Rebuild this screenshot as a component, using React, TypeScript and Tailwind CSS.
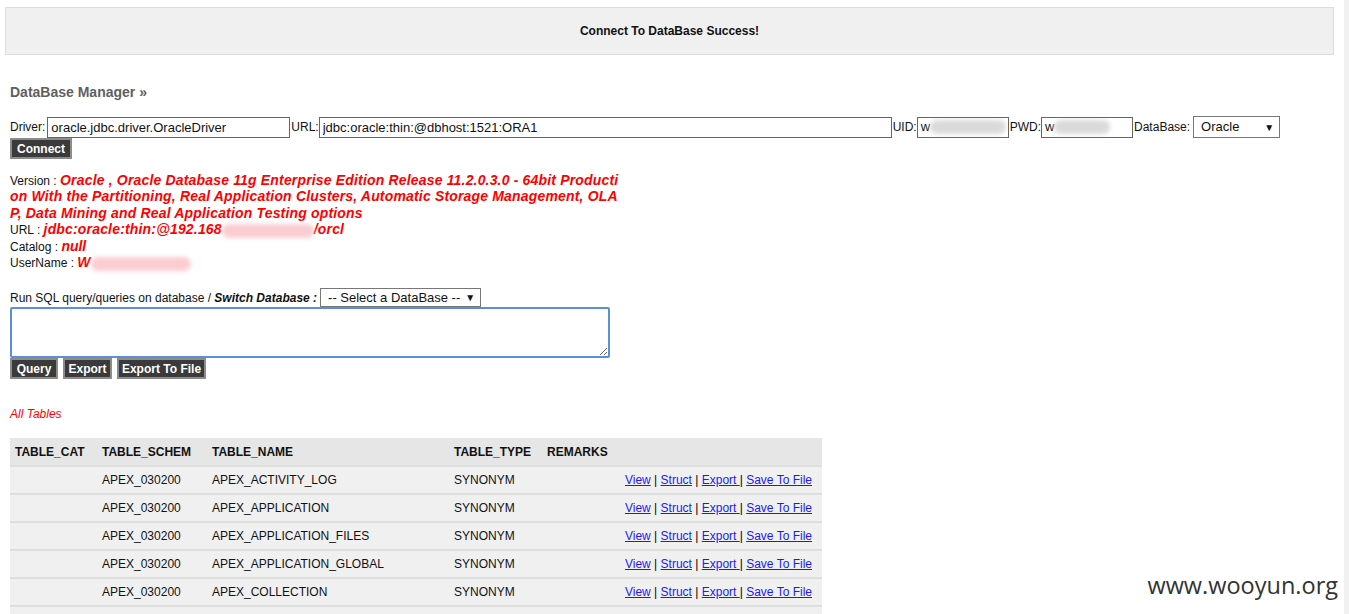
import React from "react";

const ROWS = [
  "APEX_ACTIVITY_LOG",
  "APEX_APPLICATION",
  "APEX_APPLICATION_FILES",
  "APEX_APPLICATION_GLOBAL",
  "APEX_COLLECTION",
  "APEX_COLLECTION_MEMBERS",
];

function DarkButton({ label, w }: { label: string; w: string }) {
  return (
    <button
      className={`${w} h-[21px] bg-[#3a3a3a] border-2 border-[#8c8c8c] text-white font-bold text-[12px] leading-none flex items-center justify-center`}
    >
      {label}
    </button>
  );
}

function FakeSelect({ label, w, h }: { label: string; w: string; h: string }) {
  return (
    <div
      className={`${w} ${h} border border-[#777] bg-white flex items-center justify-between pl-[7px] pr-[5px] text-[13px] text-[#111]`}
    >
      <span>{label}</span>
      <span className="text-[10px]">▼</span>
    </div>
  );
}

function Blur({ w, color }: { w: string; color: string }) {
  return <span className={`inline-block ${w} h-[14px] ${color} rounded-full blur-[2px] align-middle`} />;
}

function Links() {
  return (
    <span className="text-[#1a1aff]">
      <a className="underline">View</a> <span className="text-black">|</span> <a className="underline">Struct</a>{" "}
      <span className="text-black">|</span> <a className="underline">Export </a>
      <span className="text-black">|</span> <a className="underline">Save To File</a>
    </span>
  );
}

export default function App() {
  return (
    <div className="min-h-screen flex bg-white text-[12px] text-[#111]" style={{ fontFamily: '"Liberation Sans", Arial, sans-serif' }}>
      <div className="flex-1 relative">
        {/* status banner */}
        <div className="mt-[7px] ml-[5px] mr-[10px] h-[48px] bg-[#f0f0f0] border border-[#dcdcdc] flex items-center justify-center font-bold text-[12px] text-[#111]">
          Connect To DataBase Success!
        </div>

        <div className="px-[10px]">
          <h2 className="mt-[29px] text-[14px] font-bold text-[#5f5f5f] leading-[16px]">DataBase Manager »</h2>

          {/* connection form */}
          <div className="mt-[16px] flex items-center h-[22px]">
            <span>Driver:</span>
            <input
              defaultValue="oracle.jdbc.driver.OracleDriver"
              className="ml-[2px] w-[243px] h-[21px] border border-[#666] px-[3px] text-[13px] outline-none"
            />
            <span className="ml-[1px]">URL:</span>
            <input
              defaultValue="jdbc:oracle:thin:@dbhost:1521:ORA1"
              className="w-[573px] h-[21px] border border-[#666] px-[3px] text-[13px] outline-none"
            />
            <span className="ml-[1px]">UID:</span>
            <div className="w-[92px] h-[21px] border border-[#666] flex items-center pl-[3px] text-[13px] overflow-hidden">
              w<Blur w="w-[76px]" color="bg-[#dadada]" />
            </div>
            <span className="ml-[1px]">PWD:</span>
            <div className="w-[92px] h-[21px] border border-[#666] flex items-center pl-[3px] text-[13px] overflow-hidden">
              w<Blur w="w-[56px]" color="bg-[#dadada]" />
            </div>
            <span className="ml-[1px] mr-[3px]">DataBase:</span>
            <FakeSelect label="Oracle" w="w-[87px]" h="h-[22px]" />
          </div>
          <div>
            <DarkButton label="Connect" w="w-[62px]" />
          </div>

          {/* connection info */}
          <div className="mt-[14px] w-[612px] break-all leading-[15.4px]">
            <div>
              Version :{" "}
              <span className="text-[14px] font-bold italic text-[#ff0000] tracking-[0.17px]">
                Oracle , Oracle Database 11g Enterprise Edition Release 11.2.0.3.0 - 64bit Production With the
                Partitioning, Real Application Clusters, Automatic Storage Management, OLAP, Data Mining and Real
                Application Testing options
              </span>
            </div>
            <div>
              URL :{" "}
              <span className="text-[14px] font-bold italic text-[#ff0000] tracking-[0.17px]">
                jdbc:oracle:thin:@192.168<Blur w="w-[92px]" color="bg-[#fbcdd2]" />/orcl
              </span>
            </div>
            <div>
              Catalog : <span className="text-[14px] font-bold italic text-[#ff0000]">null</span>
            </div>
            <div>
              UserName : <span className="text-[14px] font-bold italic text-[#ff0000]">W</span>
              <Blur w="w-[100px]" color="bg-[#fbcdd2]" />
            </div>
          </div>

          {/* query box */}
          <div className="mt-[17px] flex items-center h-[19px]">
            <span>
              Run SQL query/queries on database / <b className="italic">Switch Database :</b>
            </span>
            <div className="ml-[3px]">
              <FakeSelect label="-- Select a DataBase --" w="w-[161px]" h="h-[19px]" />
            </div>
          </div>
          <textarea className="block w-[600px] h-[51px] border-2 border-[#5b8fd8] rounded-[2px] outline-none" />
          <div className="flex gap-[5px]">
            <DarkButton label="Query" w="w-[48px]" />
            <DarkButton label="Export" w="w-[49px]" />
            <DarkButton label="Export To File" w="w-[89px]" />
          </div>

          <div className="mt-[28px] italic text-[#ff0000] leading-[14px]">All Tables</div>

          {/* table list */}
          <table className="mt-[17px] w-[812px] table-fixed border-collapse">
            <colgroup>
              <col className="w-[87px]" />
              <col className="w-[110px]" />
              <col className="w-[242px]" />
              <col className="w-[93px]" />
              <col className="w-[73px]" />
              <col />
            </colgroup>
            <thead>
              <tr className="h-[28px] bg-[#e6e6e6] border-b-2 border-[#dedede] text-left font-bold">
                <th className="pl-[5px]">TABLE_CAT</th>
                <th className="pl-[5px]">TABLE_SCHEM</th>
                <th className="pl-[5px]">TABLE_NAME</th>
                <th className="pl-[5px]">TABLE_TYPE</th>
                <th className="pl-[5px]">REMARKS</th>
                <th />
              </tr>
            </thead>
            <tbody>
              {ROWS.map((name) => (
                <tr key={name} className="h-[28px] bg-[#f0f0f0] border-b-2 border-[#dedede]">
                  <td className="pl-[5px]" />
                  <td className="pl-[5px]">APEX_030200</td>
                  <td className="pl-[5px]">{name}</td>
                  <td className="pl-[5px]">SYNONYM</td>
                  <td className="pl-[5px]" />
                  <td className="pr-[10px] text-right whitespace-nowrap">
                    <Links />
                  </td>
                </tr>
              ))}
            </tbody>
          </table>
        </div>

        {/* watermark */}
        <div
          className="absolute right-[6px] top-[568px] text-[23.5px] text-[#333]"
          style={{ fontFamily: '"Open Sans", sans-serif' }}
        >
          www.wooyun.org
        </div>
      </div>
      <div className="w-[5px] bg-[#f1f1f1]" />
    </div>
  );
}
